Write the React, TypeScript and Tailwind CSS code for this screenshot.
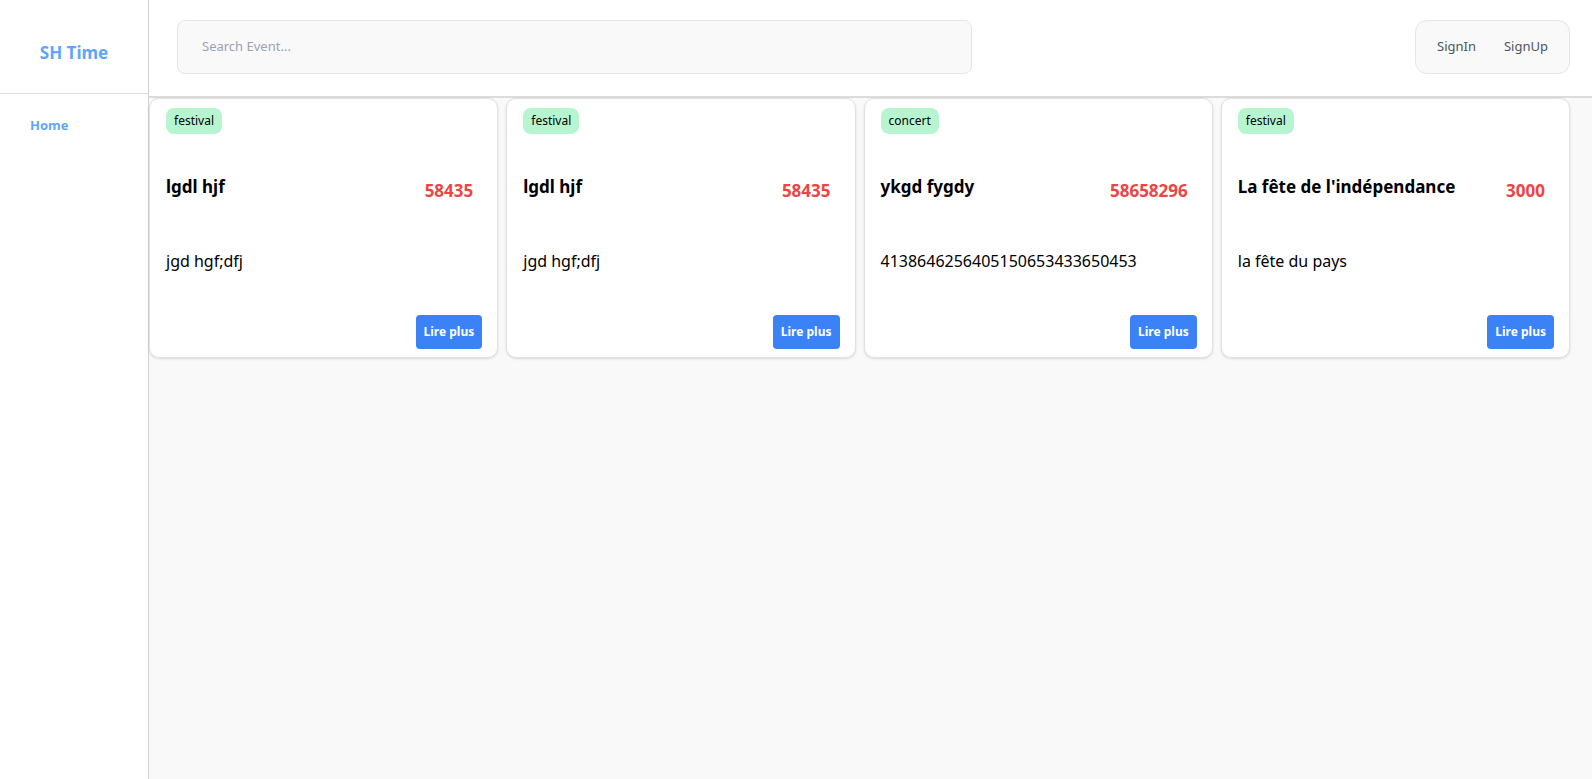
import React from 'react'

const events = [
  { tag: 'festival', title: 'lgdl hjf', price: '58435', desc: 'jgd hgf;dfj' },
  { tag: 'festival', title: 'lgdl hjf', price: '58435', desc: 'jgd hgf;dfj' },
  { tag: 'concert', title: 'ykgd fygdy', price: '58658296', desc: '4138646256405150653433650453' },
  { tag: 'festival', title: "La fête de l'indépendance", price: '3000', desc: 'la fête du pays' },
]

function EventCard({ ev }: { ev: (typeof events)[number] }) {
  return (
    <div className="bg-white border border-[#e2e2e2] rounded-[10px] shadow-sm h-[260px] pl-4 pr-[15px] pt-2 pb-2 flex flex-col">
      <div>
        <span className="inline-flex items-center h-[26px] px-2 rounded-lg bg-[#b6f5d0] text-[12px] text-black">{ev.tag}</span>
      </div>
      <div className="flex justify-between items-start mt-[39px]">
        <h3 className="text-[17px] leading-7 font-bold text-black">{ev.title}</h3>
        <span className="text-[17px] leading-7 font-bold text-[#ef4444] pt-[4px] pr-[9px]">{ev.price}</span>
      </div>
      <p className="mt-[42px] text-[16px] leading-7 text-black">{ev.desc}</p>
      <div className="mt-auto flex justify-end">
        <button className="h-[34px] px-2 rounded bg-[#3b82f6] text-white text-[12px] font-bold">Lire plus</button>
      </div>
    </div>
  )
}

export default function App() {
  return (
    <div className="flex h-[779px] w-full bg-[#f9f9f9] font-['Noto_Sans',sans-serif] overflow-hidden">
      {/* Sidebar */}
      <aside className="w-[149px] shrink-0 bg-white border-r border-[#d4d4d4] flex flex-col">
        <div className="h-[94px] border-b border-[#dcdcdc] flex justify-center pt-[39px]">
          <span className="text-[17px] leading-7 font-bold text-[#60a5fa]">SH Time</span>
        </div>
        <nav className="pl-[30px] pt-[18px]">
          <a className="text-[13px] leading-5 font-bold text-[#60a5fa]">Home</a>
        </nav>
      </aside>

      <main className="flex-1 flex flex-col">
        <header className="h-[98px] bg-white border-b-2 border-[#dcdcdc] flex items-center justify-between pl-7 pr-[22px] pb-[2px]">
          <div className="w-[795px] h-[54px] rounded-lg border border-[#e5e5e5] bg-[#f9f9f9] flex items-center pl-6">
            <input
              placeholder="Search Event..."
              className="bg-transparent outline-none text-[13px] text-gray-700 placeholder:text-[#9ca3af] w-full"
            />
          </div>
          <div className="w-[155px] h-[54px] rounded-xl border border-[#e5e5e5] bg-[#f9f9f9] flex items-center justify-center gap-[28px] text-[13px] text-[#4b5563]">
            <span>SignIn</span>
            <span>SignUp</span>
          </div>
        </header>

        <section className="grid grid-cols-4 gap-2 pr-[22px]">
          {events.map((ev, i) => (
            <EventCard key={i} ev={ev} />
          ))}
        </section>
      </main>
    </div>
  )
}
